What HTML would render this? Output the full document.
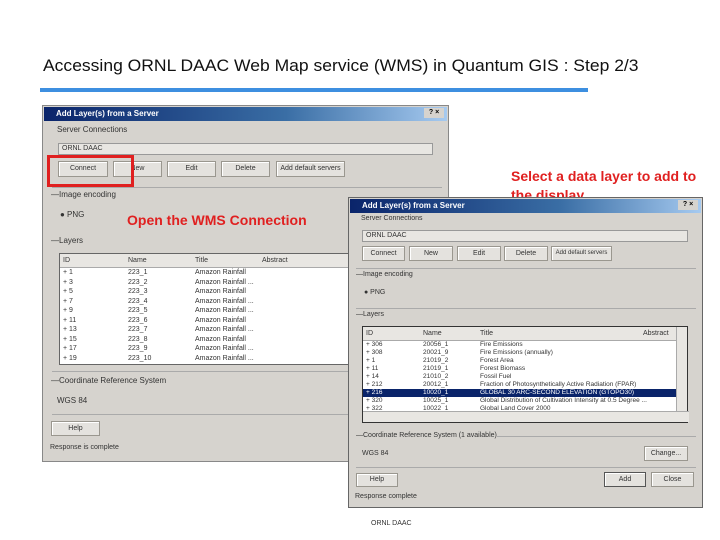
<!DOCTYPE html>
<html><head><meta charset="utf-8"><style>
*{margin:0;padding:0;box-sizing:border-box}
body{width:720px;height:540px;background:#fff;position:relative;overflow:hidden;font-family:"Liberation Sans",sans-serif}
.a{position:absolute}
.t{font-size:8px;color:#333;white-space:nowrap}
.dlg{background:#d6d3ce;border:1px solid #888}
.tb{background:linear-gradient(90deg,#0a246a,#3a6ea5 60%,#a6caf0);color:#fff;font-size:8px;font-weight:bold;padding-left:12px;line-height:14px}
.btn{background:#e4e2de;border:1px solid #9a978f;box-shadow:inset 1px 1px #fff;font-size:7px;color:#333;text-align:center;white-space:nowrap;overflow:hidden}
.ln{border-top:1px solid #aaa;height:0}
.tbl{background:#fff;border:1px solid #666}
.hd{background:#e8e6e2;border-bottom:1px solid #aaa}
</style></head><body>
<div class="a" style="left:43px;top:56px;font-size:17px;color:#111;white-space:nowrap;transform:scaleX(1.03);transform-origin:left">Accessing ORNL DAAC Web Map service (WMS) in Quantum GIS : Step 2/3</div>
<div class="a" style="left:40px;top:88px;width:548px;height:4px;background:#3d8fe0"></div>

<div class="a" style="left:511px;top:167px;font-size:14px;font-weight:bold;color:#e02020;white-space:nowrap;line-height:19px">Select a data layer to add to<br>the display</div>

<!-- Dialog 1 -->
<div class="a dlg" style="left:42px;top:105px;width:407px;height:357px">
 <div class="tb" style="margin:1px">Add Layer(s) from a Server<span style="position:absolute;right:4px;top:2px;background:#d6d3ce;color:#000;width:20px;height:10px;font-size:7px;line-height:10px;text-align:center">? ×</span></div>
</div>
<div class="a t" style="left:57px;top:125px">Server Connections</div>
<div class="a" style="left:58px;top:143px;width:375px;height:12px;background:#e8e6e2;border:1px solid #999"><span class="t" style="position:absolute;left:3px;top:1px;font-size:7px">ORNL DAAC</span></div>
<div class="a btn" style="left:58px;top:161px;width:50px;height:16px;line-height:14px">Connect</div>
<div class="a btn" style="left:113px;top:161px;width:49px;height:16px;line-height:14px">New</div>
<div class="a btn" style="left:167px;top:161px;width:49px;height:16px;line-height:14px">Edit</div>
<div class="a btn" style="left:221px;top:161px;width:49px;height:16px;line-height:14px">Delete</div>
<div class="a btn" style="left:276px;top:161px;width:69px;height:16px;line-height:14px">Add default servers</div>
<div class="a" style="left:47px;top:155px;width:87px;height:32px;border:3px solid #e02020"></div>
<div class="a ln" style="left:52px;top:187px;width:390px"></div>
<div class="a t" style="left:51px;top:190px">—Image encoding</div>
<div class="a t" style="left:60px;top:210px">● PNG</div>
<div class="a" style="left:127px;top:212px;font-size:14px;font-weight:bold;color:#e02020;white-space:nowrap">Open the WMS Connection</div>
<div class="a t" style="left:51px;top:236px">—Layers</div>
<div class="a tbl" style="left:59px;top:253px;width:300px;height:112px">
 <div class="hd" style="height:14px;position:relative">
  <span class="t a" style="left:3px;top:3px;font-size:7px">ID</span>
  <span class="t a" style="left:68px;top:3px;font-size:7px">Name</span>
  <span class="t a" style="left:135px;top:3px;font-size:7px">Title</span>
  <span class="t a" style="left:202px;top:3px;font-size:7px">Abstract</span>
 </div>
 <div style="font-size:7px;color:#333;line-height:9.5px;position:relative">
  <div class="a" style="left:3px;top:0">+ 1<br>+ 3<br>+ 5<br>+ 7<br>+ 9<br>+ 11<br>+ 13<br>+ 15<br>+ 17<br>+ 19</div>
  <div class="a" style="left:68px;top:0">223_1<br>223_2<br>223_3<br>223_4<br>223_5<br>223_6<br>223_7<br>223_8<br>223_9<br>223_10</div>
  <div class="a" style="left:135px;top:0">Amazon Rainfall<br>Amazon Rainfall ...<br>Amazon Rainfall<br>Amazon Rainfall ...<br>Amazon Rainfall ...<br>Amazon Rainfall<br>Amazon Rainfall ...<br>Amazon Rainfall<br>Amazon Rainfall ...<br>Amazon Rainfall ...</div>
 </div>
</div>
<div class="a ln" style="left:52px;top:371px;width:300px"></div>
<div class="a t" style="left:51px;top:376px">—Coordinate Reference System</div>
<div class="a t" style="left:57px;top:396px">WGS 84</div>
<div class="a ln" style="left:52px;top:414px;width:300px"></div>
<div class="a btn" style="left:51px;top:421px;width:49px;height:15px;line-height:13px">Help</div>
<div class="a t" style="left:50px;top:444px;font-size:7px">Response is complete</div>

<!-- Dialog 2 -->
<div class="a dlg" style="left:348px;top:197px;width:355px;height:311px;border-color:#666">
 <div class="tb" style="margin:1px">Add Layer(s) from a Server<span style="position:absolute;right:4px;top:2px;background:#d6d3ce;color:#000;width:20px;height:10px;font-size:7px;line-height:10px;text-align:center">? ×</span></div>
</div>
<div class="a t" style="left:361px;top:215px;font-size:7px">Server Connections</div>
<div class="a" style="left:362px;top:230px;width:326px;height:12px;background:#e8e6e2;border:1px solid #999"><span class="t" style="position:absolute;left:3px;top:1px;font-size:7px">ORNL DAAC</span></div>
<div class="a btn" style="left:362px;top:246px;width:43px;height:15px;line-height:13px">Connect</div>
<div class="a btn" style="left:409px;top:246px;width:44px;height:15px;line-height:13px">New</div>
<div class="a btn" style="left:457px;top:246px;width:44px;height:15px;line-height:13px">Edit</div>
<div class="a btn" style="left:504px;top:246px;width:44px;height:15px;line-height:13px">Delete</div>
<div class="a btn" style="left:551px;top:246px;width:61px;height:15px;line-height:13px;font-size:6px">Add default servers</div>
<div class="a ln" style="left:356px;top:268px;width:340px"></div>
<div class="a t" style="left:356px;top:271px;font-size:7px">—Image encoding</div>
<div class="a t" style="left:364px;top:289px;font-size:7px">● PNG</div>
<div class="a ln" style="left:356px;top:308px;width:340px"></div>
<div class="a t" style="left:356px;top:311px;font-size:7px">—Layers</div>
<div class="a tbl" style="left:362px;top:326px;width:326px;height:97px;border:1px solid #333">
 <div class="hd" style="height:14px;position:relative">
  <span class="t a" style="left:3px;top:3px;font-size:7px">ID</span>
  <span class="t a" style="left:60px;top:3px;font-size:7px">Name</span>
  <span class="t a" style="left:117px;top:3px;font-size:7px">Title</span>
  <span class="t a" style="left:280px;top:3px;font-size:7px">Abstract</span>
 </div>
 <div class="a" style="left:0;top:62px;width:314px;height:8px;background:#0a246a"></div>
 <div style="font-size:6.5px;color:#333;line-height:8px;position:relative">
  <div class="a" style="left:3px;top:0">+ 306<br>+ 308<br>+ 1<br>+ 11<br>+ 14<br>+ 212<br><span style="color:#fff">+ 216</span><br>+ 320<br>+ 322</div>
  <div class="a" style="left:60px;top:0">20056_1<br>20021_9<br>21019_2<br>21019_1<br>21010_2<br>20012_1<br><span style="color:#fff">10020_1</span><br>10025_1<br>10022_1</div>
  <div class="a" style="left:117px;top:0">Fire Emissions<br>Fire Emissions (annually)<br>Forest Area<br>Forest Biomass<br>Fossil Fuel<br>Fraction of Photosynthetically Active Radiation (FPAR)<br><span style="color:#fff">GLOBAL 30 ARC-SECOND ELEVATION (GTOPO30)</span><br>Global Distribution of Cultivation Intensity at 0.5 Degree ...<br>Global Land Cover 2000</div>
 </div>
 <div class="a" style="right:0;top:0;width:11px;height:95px;background:#e8e6e2;border-left:1px solid #aaa"></div>
 <div class="a" style="left:0;bottom:0;width:326px;height:11px;background:#e8e6e2;border-top:1px solid #aaa"></div>
</div>
<div class="a ln" style="left:356px;top:436px;width:340px"></div>
<div class="a t" style="left:356px;top:432px;font-size:7px;background:#d6d3ce">—Coordinate Reference System (1 available)</div>
<div class="a t" style="left:362px;top:450px;font-size:7px">WGS 84</div>
<div class="a btn" style="left:644px;top:446px;width:44px;height:15px;line-height:13px">Change...</div>
<div class="a ln" style="left:356px;top:467px;width:340px"></div>
<div class="a btn" style="left:356px;top:473px;width:42px;height:14px;line-height:12px">Help</div>
<div class="a btn" style="left:604px;top:472px;width:42px;height:15px;line-height:13px;border-color:#555">Add</div>
<div class="a btn" style="left:651px;top:472px;width:43px;height:15px;line-height:13px">Close</div>
<div class="a t" style="left:355px;top:493px;font-size:7px">Response complete</div>

<div class="a" style="left:371px;top:520px;font-size:7px;color:#333">ORNL DAAC</div>
</body></html>
